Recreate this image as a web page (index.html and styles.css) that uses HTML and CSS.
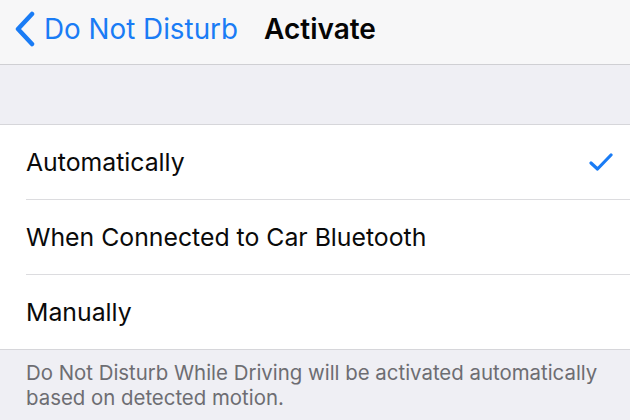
FILE: index.html
```html
<!DOCTYPE html>
<html>
<head>
<meta charset="utf-8">
<link rel="stylesheet" href="styles.css">
</head>
<body>
<div class="nav">
  <div class="back">
    <svg class="chev" width="22" height="36" viewBox="0 0 22 36"><path d="M18 3 L4 18 L18 33" fill="none" stroke="#1a7cf5" stroke-width="4.5" stroke-linecap="round" stroke-linejoin="round"/></svg>
    <span class="back-label">Do Not Disturb</span>
  </div>
  <div class="title">Activate</div>
</div>
<div class="spacer"></div>
<div class="list">
  <div class="row"><span class="label">Automatically</span>
    <svg class="check" width="24" height="20" viewBox="0 0 24 20"><path d="M2 11 L8.5 17 L22 3" fill="none" stroke="#1a7cf5" stroke-width="3.2" stroke-linecap="round" stroke-linejoin="round"/></svg>
  </div>
  <div class="row"><span class="label">When Connected to Car Bluetooth</span></div>
  <div class="row last"><span class="label">Manually</span></div>
</div>
<div class="footer">Do Not Disturb While Driving will be activated automatically based on detected motion.</div>
</body>
</html>
```
FILE: styles.css
```css
html, body { margin: 0; padding: 0; }
body {
  width: 630px;
  height: 420px;
  overflow: hidden;
  background: #efeff4;
  font-family: Inter, "Liberation Sans", Arial, sans-serif;
}
.nav {
  height: 65px;
  background: #f7f7f8;
  border-bottom: 1px solid #cfcfd3;
  display: flex;
  align-items: center;
  box-sizing: border-box;
  padding-left: 14px;
}
.back {
  display: flex;
  align-items: center;
  color: #1a7cf5;
}
.chev { margin-top: -6px; }
.back-label {
  font-size: 27.8px;
  margin-left: 8px;
  margin-top: -6px;
}
.title {
  font-size: 28px;
  font-weight: 600;
  color: #050505;
  margin-left: 26px;
  margin-top: -6px;
}
.spacer {
  height: 59px;
  border-bottom: 1px solid #d6d6da;
}
.list {
  background: #ffffff;
  border-bottom: 1px solid #d6d6da;
}
.row {
  height: 74px;
  margin-left: 26px;
  padding-right: 17px;
  border-bottom: 1px solid #dcdcdf;
  display: flex;
  align-items: center;
  justify-content: space-between;
}
.row.last { border-bottom: none; }
.label {
  font-size: 24.8px;
  color: #0a0a0a;
}
.footer {
  padding: 10px 26px 0 26px;
  font-size: 20.4px;
  line-height: 25px;
  color: #6d6d72;
}
```
